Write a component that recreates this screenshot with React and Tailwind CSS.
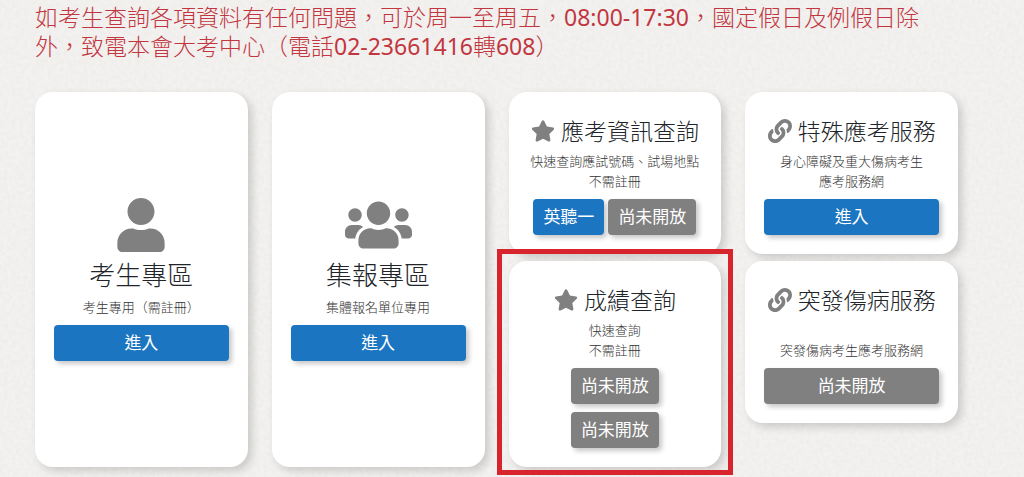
import React from 'react';
import { FaUser, FaUsers, FaStar, FaLink } from 'react-icons/fa';

const Action = ({ label, closed, wide }) => (
    <button
        type="button"
        disabled={closed}
        className={`h-9 px-[10px] rounded-[4px] text-[17px] leading-5 font-normal text-white shadow-[3px_3px_5px_rgba(0,0,0,0.22)] ${closed ? 'bg-[#808080]' : 'bg-[#1c75c0]'} ${wide ? 'w-full' : ''}`}
    >
        {label}
    </button>
);

const cardClass = "relative bg-white rounded-[18px] shadow-[4px_4px_8px_rgba(0,0,0,0.16)] px-[19px] flex flex-col items-center text-center";

// Full height card for the two login areas
const AreaCard = ({ icon, title, note }) => (
    <section className={`${cardClass} justify-center`}>
        {icon}
        <h2 className="mt-[6px] mb-[5px] text-[26px] leading-[34px] text-[#212529]">{title}</h2>
        <p className="mb-2 text-[13px] leading-5 text-[#333333]">{note}</p>
        <Action label="進入" wide />
    </section>
);

const ServiceCard = ({ icon, title, lines, children, highlighted }) => (
    <section className={`${cardClass} pt-6 pb-[19px]`}>
        <h2 className="mb-[5px] flex items-center justify-center gap-[6px] text-[23px] leading-[30px] text-[#212529] whitespace-nowrap">
            {icon}
            {title}
        </h2>
        <div className="mb-2 text-[13px] leading-5 text-[#333333] whitespace-nowrap">
            {lines.map((line, i) => (
                <p key={i} className="min-h-5">{line}</p>
            ))}
        </div>
        {children}
        {highlighted && (
            <div className="absolute -inset-x-3 -top-3 -bottom-2 border-[5px] border-[#d8242c] pointer-events-none" />
        )}
    </section>
);

// Faint paper grain behind the page
const Paper = () => (
    <svg className="absolute inset-0 w-full h-full opacity-10 pointer-events-none" aria-hidden="true">
        <filter id="grain">
            <feTurbulence type="fractalNoise" baseFrequency="0.25" numOctaves="4" seed="3" />
            <feColorMatrix type="matrix" values="0 0 0 0 0.45  0 0 0 0 0.43  0 0 0 0 0.4  1.4 0 0 0 -0.4" />
        </filter>
        <rect width="100%" height="100%" filter="url(#grain)" />
    </svg>
);

export default function App() {
    const star = <FaStar size={24} className="text-[#808080]" />;
    const link = <FaLink size={24} className="text-[#808080]" />;

    return (
        <div lang="zh-Hant-TW" className="relative min-h-screen overflow-hidden bg-[#f3f2f0] font-['Noto_Sans','Noto_Sans_CJK_TC',sans-serif] font-light">
            <Paper />
            <main className="relative pl-[35px] pr-[66px] pt-[3px] pb-2">
                <p className="mb-[31px] text-[23px] leading-[29px] text-[#c2363f]">
                    如考生查詢各項資料有任何問題，可於周一至周五，<span className="font-normal">08:00-17:30</span>，國定假日及例假日除
                    <br />
                    外，致電本會大考中心（電話<span className="font-normal">02-23661416</span>轉<span className="font-normal">608</span>）
                </p>

                <div className="grid grid-cols-4 gap-6">
                    <AreaCard
                        icon={<FaUser size={54} className="text-[#808080]" />}
                        title="考生專區"
                        note="考生專用（需註冊）"
                    />
                    <AreaCard
                        icon={<FaUsers size={54} className="text-[#808080] w-[67px]" />}
                        title="集報專區"
                        note="集體報名單位專用"
                    />

                    <div className="flex flex-col gap-[7px]">
                        <ServiceCard icon={star} title="應考資訊查詢" lines={['快速查詢應試號碼、試場地點', '不需註冊']}>
                            <div className="flex gap-1">
                                <Action label="英聽一" />
                                <Action label="尚未開放" closed />
                            </div>
                        </ServiceCard>
                        <ServiceCard icon={star} title="成績查詢" lines={['快速查詢', '不需註冊']} highlighted>
                            <div className="flex flex-col gap-2">
                                <Action label="尚未開放" closed />
                                <Action label="尚未開放" closed />
                            </div>
                        </ServiceCard>
                    </div>

                    <div className="flex flex-col gap-[7px]">
                        <ServiceCard icon={link} title="特殊應考服務" lines={['身心障礙及重大傷病考生', '應考服務網']}>
                            <Action label="進入" wide />
                        </ServiceCard>
                        <ServiceCard icon={link} title="突發傷病服務" lines={['', '突發傷病考生應考服務網']}>
                            <Action label="尚未開放" closed wide />
                        </ServiceCard>
                    </div>
                </div>
            </main>
        </div>
    );
}
